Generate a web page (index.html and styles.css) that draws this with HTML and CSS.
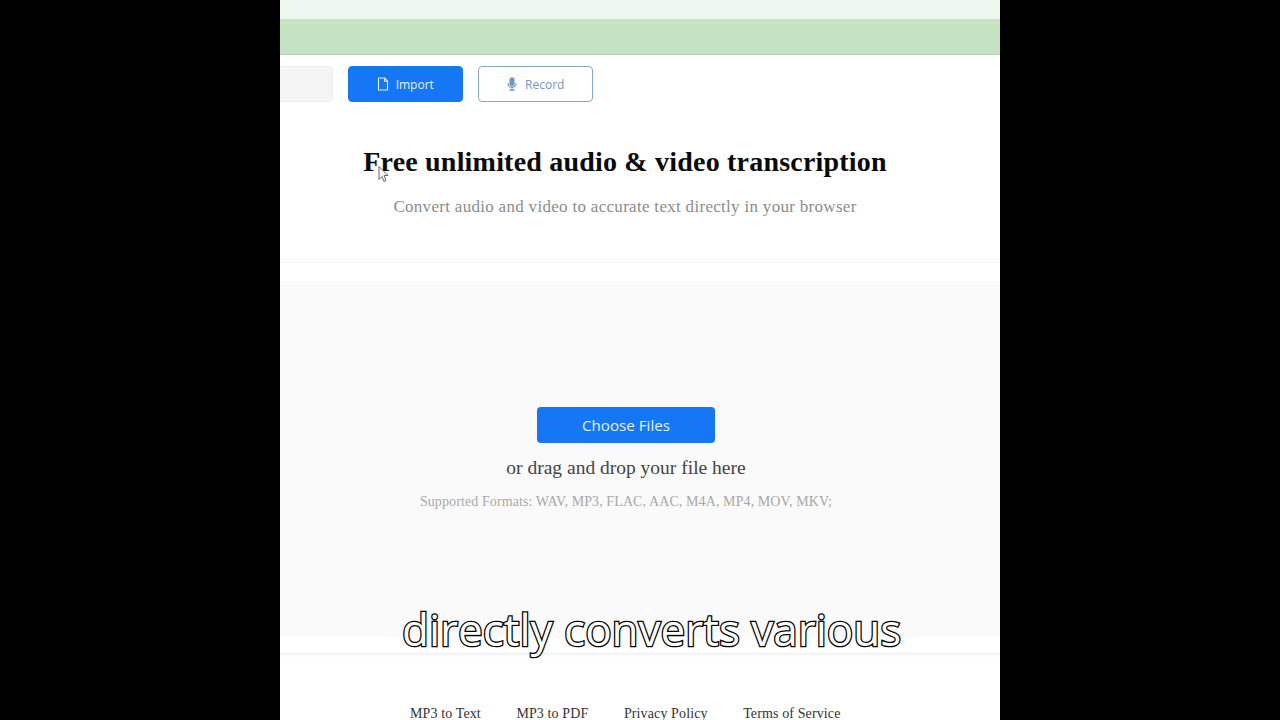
FILE: index.html
```html
<!DOCTYPE html>
<html lang="en">
<head>
<meta charset="utf-8">
<title>Free unlimited audio &amp; video transcription</title>
<link rel="stylesheet" href="styles.css">
</head>
<body>
<div class="frame">
  <div class="band-light"></div>
  <div class="band-green"></div>
  <div class="toolbar">
    <div class="btn-ghost"></div>
    <button class="btn btn-primary">
      <svg class="ico" viewBox="0 0 12 14" width="12" height="14" fill="none" stroke="currentColor" stroke-width="1.1" stroke-linejoin="round"><path d="M1.5 1h6l3 3.2v8.8h-9z"/><path d="M7.5 1v3.2h3"/></svg>
      Import
    </button>
    <button class="btn btn-outline">
      <svg class="ico" viewBox="0 0 12 14" width="12" height="14" fill="none" stroke="currentColor" stroke-width="1.2" stroke-linecap="round"><rect x="4" y="0.8" width="4" height="8" rx="2" fill="currentColor"/><path d="M2 6.5a4 4 0 0 0 8 0"/><path d="M6 10.6v2.4M3.8 13.2h4.4"/></svg>
      Record
    </button>
  </div>
  <header class="hero">
    <h1 class="title">Free unlimited audio &amp; video transcription</h1>
    <p class="lead">Convert audio and video to accurate text directly in your browser</p>
  </header>
  <main class="drop">
    <div class="zone">
      <button class="choose">Choose Files</button>
      <p class="drag">or drag and drop your file here</p>
      <p class="formats">Supported Formats: WAV, MP3, FLAC, AAC, M4A, MP4, MOV, MKV;</p>
    </div>
  </main>
  <footer class="links">
    <a>MP3 to Text</a>
    <a>MP3 to PDF</a>
    <a>Privacy Policy</a>
    <a>Terms of Service</a>
  </footer>
  <svg class="cursor" viewBox="0 0 12 18" width="12" height="19"><path d="M1 1v13l3-3 2 5 2-1-2-5h4z" fill="#fff" stroke="#666" stroke-width="1"/></svg>
  <div class="caption">directly converts various</div>
</div>
</body>
</html>
```
FILE: styles.css
```css
* { box-sizing: border-box; }
html, body { margin: 0; height: 100%; background: #000; overflow: hidden; }
body { display: flex; justify-content: center; }
.frame {
  position: relative;
  width: 720px;
  height: 720px;
  background: #fff;
  overflow: hidden;
  font-family: "Liberation Serif", serif;
  display: flex;
  flex-direction: column;
}
.frame > * { flex-shrink: 0; }
.band-light { height: 19px; background: #edf7ef; }
.band-green { height: 36px; background: #c5e2c3; border-bottom: 1px solid #bcccb8; }
.toolbar {
  height: 46px;
  margin-top: 11px;
  display: flex;
  gap: 14.5px;
  margin-left: -60px;
}
.btn-ghost { width: 113px; height: 36px; background: #f5f5f5; border: 1px solid #ececec; border-radius: 4px; }
.btn {
  width: 115.5px;
  height: 36px;
  border-radius: 4px;
  display: flex;
  align-items: center;
  justify-content: center;
  gap: 7px;
  font: 12px "Open Sans", "Noto Sans", sans-serif;
  padding: 0;
}
.btn-primary { background: #1677f5; border: 1px solid #1677f5; color: #e4effd; }
.btn-outline { background: #fff; border: 1px solid #86aac8; color: #7099c0; }
.hero { height: 150px; padding: 34px 30px 0 0; text-align: center; }
.title { margin: 0; font-size: 28px; line-height: 32px; font-weight: bold; color: #0a0a0a; letter-spacing: 0.2px; }
.lead { margin: 19px 0 0; font-size: 17px; line-height: 20px; color: #8c8c8c; letter-spacing: 0.3px; }
.drop {
  height: 392px;
  background: #fff;
  border-top: 1px solid #f4f4f4;
  border-bottom: 1px solid #f1f1f1;
  padding: 18px 0 16px;
  box-shadow: 0 2px 3px #f8f8f8;
  display: flex;
}
.zone {
  flex: 1;
  background: #fafafa;
  display: flex;
  flex-direction: column;
  align-items: center;
  padding: 126px 28px 0 0;
}
.choose {
  width: 178px;
  height: 36px;
  background: #1677f5;
  color: #e6f0fd;
  border: 0;
  border-radius: 4px;
  font: 15.2px "Open Sans", "Noto Sans", sans-serif;
  padding: 0;
}
.drag { margin: 13px 0 0; font-size: 19.5px; line-height: 24px; color: #444; }
.formats { margin: 14px 0 0; font-size: 14px; line-height: 16px; color: #a8a8a8; letter-spacing: 0.1px; }
.links {
  display: flex;
  gap: 35.5px;
  padding: 51px 0 0 130px;
  font-size: 14px;
  line-height: 18px;
  letter-spacing: 0.12px;
  color: #333;
  white-space: nowrap;
}
.cursor { position: absolute; left: 98px; top: 165px; }
.caption {
  position: absolute;
  left: 122px;
  top: 599px;
  font: 44px/60px "Open Sans", "Noto Sans", sans-serif;
  white-space: nowrap;
  color: #fff;
  -webkit-text-stroke: 2.6px #000;
  paint-order: stroke fill;
}
```
